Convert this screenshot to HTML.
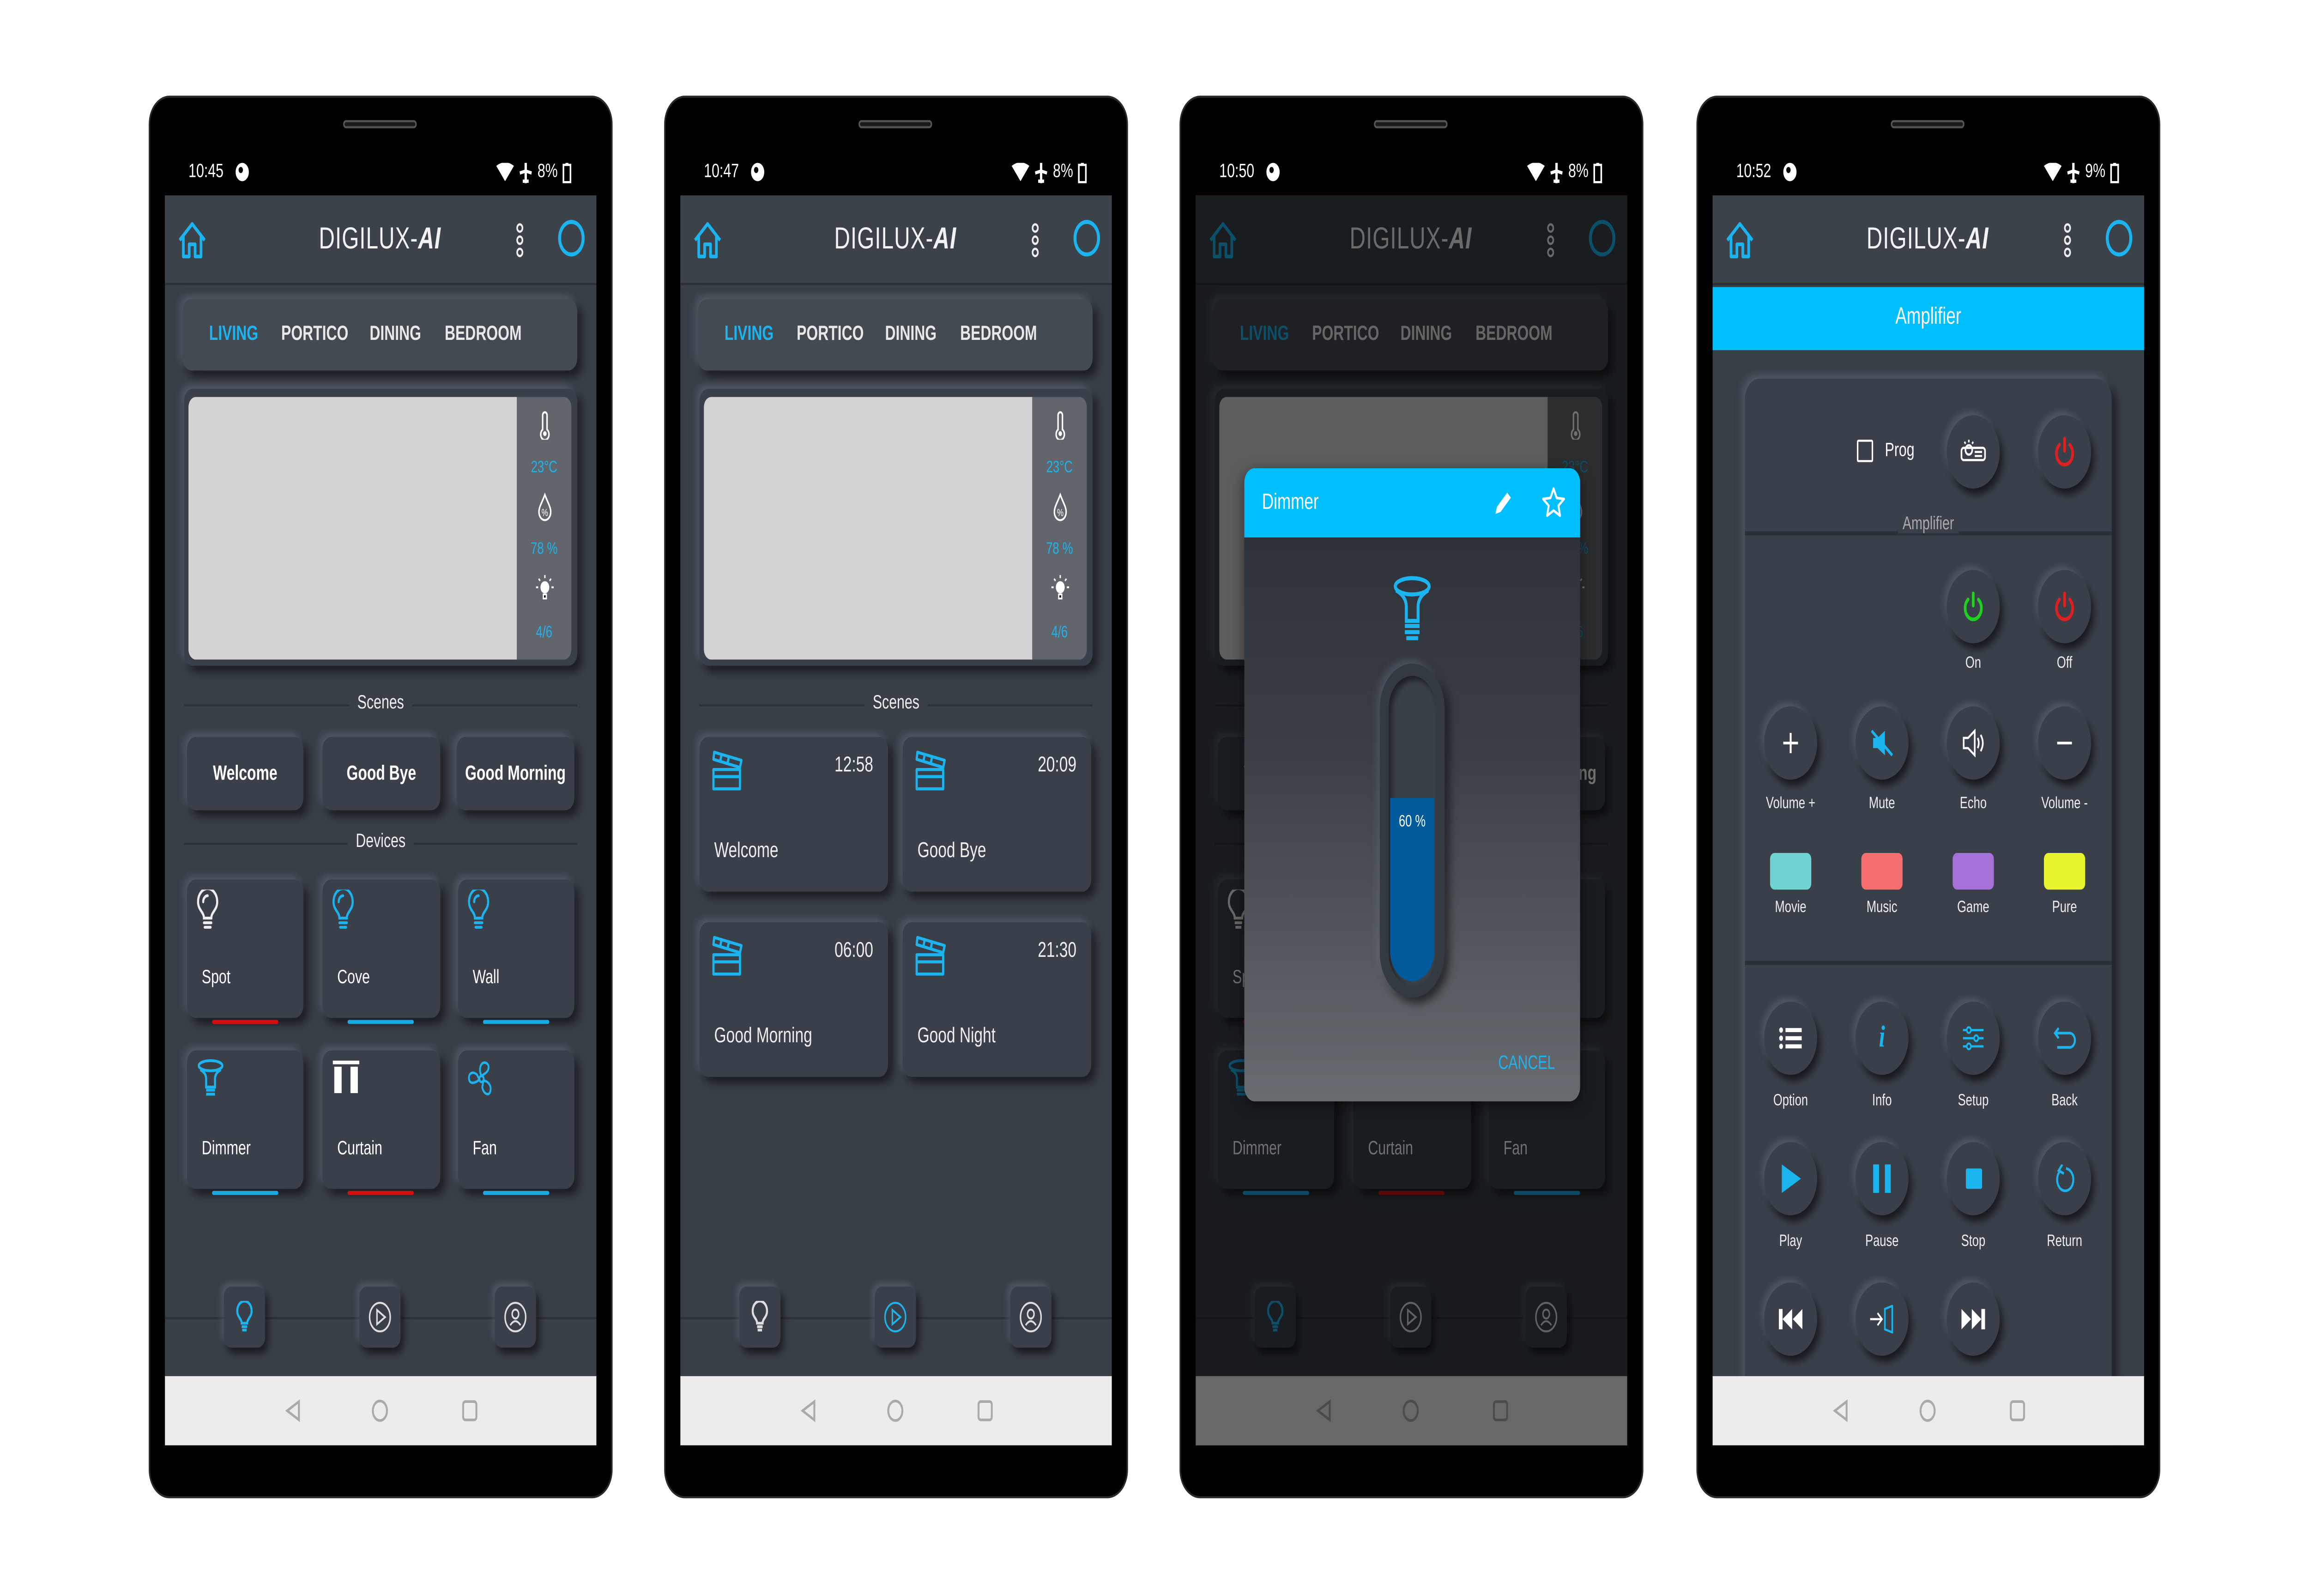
<!DOCTYPE html>
<html><head><meta charset="utf-8"><style>
*{box-sizing:border-box;margin:0;padding:0}
html,body{width:100%;height:100%;overflow:hidden;background:#fff}
#root{position:absolute;left:0;top:0;width:1568px;height:784px;transform:scale(4.408163);transform-origin:0 0;font-family:"Liberation Sans",sans-serif;color:#fff}
.ph{position:absolute;top:48px;width:313px;height:687px;background:#000;border-radius:13px;box-shadow:0 0 0 1px #2a2a2a}
.spk{position:absolute;left:131px;top:11px;width:50px;height:4px;border-radius:2px;background:#1a1a1a;border:.6px solid #555}
.tm{position:absolute;left:26px;top:31px;font-size:9.5px}
.pi{position:absolute;left:58px;top:32px;width:9px;height:9px;border-radius:50%;background:#fff}
.pi:after{content:"";position:absolute;left:2px;top:2px;width:3px;height:3px;border-radius:50%;background:#000}
.sr{position:absolute;left:235px;top:31px;font-size:9.5px;display:flex;align-items:center;gap:3px}
.scr{position:absolute;left:10px;top:48px;width:293px;height:614px;background:#393f47;overflow:hidden}
.hdr{position:absolute;left:0;top:0;width:293px;height:44px;background:#3c424a;border-bottom:1.2px solid #2b3036}
.logo{position:absolute;left:98px;top:13px;width:96px;text-align:center;font-size:15px;font-weight:300;letter-spacing:.3px;color:#f2f2f2}
.logo b{font-style:italic;font-weight:700}
.neu{position:absolute;background:#3a4049;border-radius:6px;box-shadow:-2px -2px 4px rgba(125,135,150,.35),3px 3px 5px rgba(0,0,0,.55)}
.tabs span{position:absolute;top:12px;font-size:10px;font-weight:bold;color:#e8e8e8}
.lbl{position:absolute;left:13px;width:267px;height:1px;background:#2c3137}
.lt{position:absolute;width:293px;text-align:center;font-size:9.5px;color:#eee}
.lt span{background:#393f47;padding:0 6px}
.sb{display:flex;align-items:center;justify-content:center;font-size:10px;font-weight:bold}
.dn{position:absolute;left:10px;top:43px;font-size:9.5px}
.ul{position:absolute;left:17px;width:45px;height:2.5px;bottom:-3px;border-radius:2px}
.nb{position:absolute;top:536px;width:28px;height:30px;border-radius:5px;background:#3a4049;box-shadow:-2px -2px 3px rgba(125,135,150,.3),2px 3px 4px rgba(0,0,0,.55);display:flex;align-items:center;justify-content:center}
.nav{position:absolute;left:0;top:580px;width:293px;height:34px;background:#ececec}
.side{position:absolute;left:226px;top:4px;width:37px;height:129px;background:#62666c;border-radius:0 5px 5px 0}
.side div{position:absolute;width:37px;text-align:center;font-size:8px;color:#1cb4ee;line-height:1}
.sc .t{position:absolute;right:10px;top:8px;font-size:10.5px;color:#eee}
.sc .n{position:absolute;left:10px;top:50px;font-size:10.5px;color:#eee}
.sc svg{position:absolute;left:8px;top:6px}
.rb{position:absolute;width:36px;height:36px;border-radius:50%;background:#3a4049;box-shadow:-2px -2px 3px rgba(125,135,150,.3),2px 3px 4px rgba(0,0,0,.6);display:flex;align-items:center;justify-content:center}
.rl{position:absolute;width:70px;text-align:center;font-size:8px;color:#eee}
.cr{position:absolute;width:28px;height:18px;border-radius:3px}
</style></head><body><div id="root">

<!-- PHONE 1 -->
<div class="ph" style="left:102px">
<div class="spk"></div><div class="tm">10:45</div><div class="pi"></div>
<div class="sr"><svg width="12" height="10" viewBox="0 0 12 10"><path d="M0 1.5Q6-2 12 1.5L6 9z" fill="#fff"/></svg><svg width="10" height="10" viewBox="0 0 10 10"><path d="M5 0v10M1 5l4-1 4 1M3 9h4" stroke="#fff" stroke-width="1.6" fill="none"/></svg><span>8%</span><svg width="6" height="10"><rect x=".6" y="1" width="4.8" height="8.5" fill="none" stroke="#fff" stroke-width="1.1"/><rect x="2" y="0" width="2" height="1" fill="#fff"/></svg></div>
<div class="scr">
 <div class="hdr">
  <svg style="position:absolute;left:8px;top:12px" width="21" height="20" viewBox="0 0 21 20"><path d="M2 10L10.5 2 19 10M4.5 8v10h4v-6h4v6h4V8" fill="none" stroke="#1cb4ee" stroke-width="1.8" stroke-linejoin="round"/></svg>
  <div class="logo">DIGILUX-<b>AI</b></div>
  <svg style="position:absolute;left:238px;top:13px" width="6" height="18"><circle cx="3" cy="3" r="1.8" fill="none" stroke="#eee" stroke-width="1.1"/><circle cx="3" cy="9" r="1.8" fill="none" stroke="#eee" stroke-width="1.1"/><circle cx="3" cy="15" r="1.8" fill="none" stroke="#eee" stroke-width="1.1"/></svg>
  <div style="position:absolute;left:267px;top:12px;width:18px;height:18px;border-radius:50%;border:2.6px solid #1cb4ee"></div>
 </div>
 <div class="neu tabs" style="left:12px;top:51px;width:268px;height:35px;background:#444a52"><span style="left:18px;color:#1cb4ee">LIVING</span><span style="left:67px">PORTICO</span><span style="left:127px">DINING</span><span style="left:178px">BEDROOM</span></div>
 <div class="neu" style="left:13px;top:95px;width:267px;height:136px">
  <div style="position:absolute;left:3px;top:4px;width:223px;height:129px;background:#d3d3d3;border-radius:5px 0 0 5px"></div>
  <div class="side"><div style="top:7px"><svg width="8" height="14"><path d="M2.5 9V2a1.5 1.5 0 0 1 3 0v7a2.8 2.8 0 1 1-3 0z" fill="none" stroke="#fff" stroke-width="1"/><circle cx="4" cy="11" r="1.2" fill="#fff"/></svg></div><div style="top:31px">23°C</div><div style="top:47px"><svg width="10" height="14"><path d="M5 1C3 5 1 7 1 9.5a4 4 0 0 0 8 0C9 7 7 5 5 1z" fill="none" stroke="#fff" stroke-width="1"/><text x="5" y="11.5" font-size="5" fill="#fff" text-anchor="middle">%</text></svg></div><div style="top:71px">78 %</div><div style="top:87px"><svg width="14" height="14"><circle cx="7" cy="6.5" r="3" fill="#fff"/><path d="M6 10h2v2H6zM7 .5V2M1 6.5h1.5M11.5 6.5H13M2.8 2.3l1 1M11.2 2.3l-1 1" stroke="#fff" stroke-width=".9"/></svg></div><div style="top:112px">4/6</div></div>
 </div>
 <div class="lbl" style="top:250px"></div><div class="lt" style="top:244px"><span>Scenes</span></div>
 <div class="neu sb" style="left:15px;top:266px;width:79px;height:36px">Welcome</div>
 <div class="neu sb" style="left:107px;top:266px;width:80px;height:36px">Good Bye</div>
 <div class="neu sb" style="left:198px;top:266px;width:80px;height:36px">Good Morning</div>
 <div class="lbl" style="top:318px"></div><div class="lt" style="top:312px"><span>Devices</span></div>
 <div class="neu" style="left:15px;top:336px;width:79px;height:68px"><svg style="position:absolute;left:6px;top:5px" width="16" height="20" viewBox="0 0 16 20"><path d="M5.5 14c0-3-4-4-4-8a6.5 6.5 0 0 1 13 0c0 4-4 5-4 8zM5.5 16.3h5M6 18.5h4M5 6a3 3 0 0 1 3-3" fill="none" stroke="#eee" stroke-width="1.4" stroke-linecap="round"/></svg><div class="dn">Spot</div><div class="ul" style="background:#d01010"></div></div>
 <div class="neu" style="left:107px;top:336px;width:80px;height:68px"><svg style="position:absolute;left:6px;top:5px" width="16" height="20" viewBox="0 0 16 20"><path d="M5.5 14c0-3-4-4-4-8a6.5 6.5 0 0 1 13 0c0 4-4 5-4 8zM5.5 16.3h5M6 18.5h4M5 6a3 3 0 0 1 3-3" fill="none" stroke="#1cb4ee" stroke-width="1.4" stroke-linecap="round"/></svg><div class="dn">Cove</div><div class="ul" style="background:#1ca8e0"></div></div>
 <div class="neu" style="left:199px;top:336px;width:79px;height:68px"><svg style="position:absolute;left:6px;top:5px" width="16" height="20" viewBox="0 0 16 20"><path d="M5.5 14c0-3-4-4-4-8a6.5 6.5 0 0 1 13 0c0 4-4 5-4 8zM5.5 16.3h5M6 18.5h4M5 6a3 3 0 0 1 3-3" fill="none" stroke="#1cb4ee" stroke-width="1.4" stroke-linecap="round"/></svg><div class="dn">Wall</div><div class="ul" style="background:#1ca8e0"></div></div>
 <div class="neu" style="left:15px;top:420px;width:79px;height:68px"><svg style="position:absolute;left:6px;top:4px" width="20" height="20" viewBox="0 0 20 20"><ellipse cx="10" cy="3.5" rx="8" ry="2.5" fill="none" stroke="#1cb4ee" stroke-width="1.4"/><path d="M3 5.5Q7 7 7 10v4h6v-4q0-3 4-4.5M7 15.5h6M7 17.5h6" fill="none" stroke="#1cb4ee" stroke-width="1.4"/></svg><div class="dn">Dimmer</div><div class="ul" style="background:#1ca8e0"></div></div>
 <div class="neu" style="left:107px;top:420px;width:80px;height:68px"><svg style="position:absolute;left:7px;top:5px" width="18" height="16"><rect x="0" y="0" width="18" height="1.8" fill="#fff"/><rect x="1" y="3" width="5" height="13" fill="#fff"/><rect x="12" y="3" width="5" height="13" fill="#fff"/></svg><div class="dn">Curtain</div><div class="ul" style="background:#d01010"></div></div>
 <div class="neu" style="left:199px;top:420px;width:79px;height:68px"><svg style="position:absolute;left:6px;top:5px" width="20" height="18" viewBox="0 0 20 18"><circle cx="10" cy="9" r="1.5" fill="none" stroke="#1cb4ee" stroke-width="1.2"/><path d="M10 7.5C8 5 9 1 12 1s4 3 1 5zM11.3 9.8C14 10 17 12 16 15s-5 1-5.5-2zM8.5 9.3C6 11 2 12 1.5 9s3-4 5.5-2z" fill="none" stroke="#1cb4ee" stroke-width="1.2"/></svg><div class="dn">Fan</div><div class="ul" style="background:#1ca8e0"></div></div>
 <div class="lbl" style="left:0;width:293px;top:551px"></div>
 <div class="nb" style="left:40px"><svg width="12" height="16" viewBox="0 0 16 20"><path d="M5.5 14c0-3-4-4-4-8a6.5 6.5 0 0 1 13 0c0 4-4 5-4 8zM5.5 16.3h5M6 18.5h4" fill="none" stroke="#1cb4ee" stroke-width="1.8"/></svg></div>
 <div class="nb" style="left:132px"><svg width="16" height="16"><circle cx="8" cy="8" r="7" fill="none" stroke="#ddd" stroke-width="1"/><path d="M6 4.5v7l5.5-3.5z" fill="none" stroke="#ddd" stroke-width="1"/></svg></div>
 <div class="nb" style="left:224px"><svg width="16" height="16"><circle cx="8" cy="8" r="7" fill="none" stroke="#ddd" stroke-width="1"/><circle cx="8" cy="6.5" r="2.2" fill="none" stroke="#ddd" stroke-width="1"/><path d="M4.5 12q3.5-4 7 0" fill="none" stroke="#ddd" stroke-width="1"/></svg></div>
 <div class="nav"><svg style="position:absolute;left:81px;top:11px" width="12" height="12"><path d="M10 1.5v9L2 6z" fill="none" stroke="#aaa" stroke-width="1.3"/></svg><svg style="position:absolute;left:140px;top:11px" width="12" height="12"><circle cx="6" cy="6" r="4.8" fill="none" stroke="#aaa" stroke-width="1.3"/></svg><svg style="position:absolute;left:201px;top:11px" width="12" height="12"><rect x="1.5" y="1.5" width="9" height="9" rx="1.5" fill="none" stroke="#aaa" stroke-width="1.3"/></svg></div>
</div></div>

<!-- PHONE 2 -->
<div class="ph" style="left:452px">
<div class="spk"></div><div class="tm">10:47</div><div class="pi"></div>
<div class="sr"><svg width="12" height="10" viewBox="0 0 12 10"><path d="M0 1.5Q6-2 12 1.5L6 9z" fill="#fff"/></svg><svg width="10" height="10" viewBox="0 0 10 10"><path d="M5 0v10M1 5l4-1 4 1M3 9h4" stroke="#fff" stroke-width="1.6" fill="none"/></svg><span>8%</span><svg width="6" height="10"><rect x=".6" y="1" width="4.8" height="8.5" fill="none" stroke="#fff" stroke-width="1.1"/><rect x="2" y="0" width="2" height="1" fill="#fff"/></svg></div>
<div class="scr">
 <div class="hdr">
  <svg style="position:absolute;left:8px;top:12px" width="21" height="20" viewBox="0 0 21 20"><path d="M2 10L10.5 2 19 10M4.5 8v10h4v-6h4v6h4V8" fill="none" stroke="#1cb4ee" stroke-width="1.8" stroke-linejoin="round"/></svg>
  <div class="logo">DIGILUX-<b>AI</b></div>
  <svg style="position:absolute;left:238px;top:13px" width="6" height="18"><circle cx="3" cy="3" r="1.8" fill="none" stroke="#eee" stroke-width="1.1"/><circle cx="3" cy="9" r="1.8" fill="none" stroke="#eee" stroke-width="1.1"/><circle cx="3" cy="15" r="1.8" fill="none" stroke="#eee" stroke-width="1.1"/></svg>
  <div style="position:absolute;left:267px;top:12px;width:18px;height:18px;border-radius:50%;border:2.6px solid #1cb4ee"></div>
 </div>
 <div class="neu tabs" style="left:12px;top:51px;width:268px;height:35px;background:#444a52"><span style="left:18px;color:#1cb4ee">LIVING</span><span style="left:67px">PORTICO</span><span style="left:127px">DINING</span><span style="left:178px">BEDROOM</span></div>
 <div class="neu" style="left:13px;top:95px;width:267px;height:136px">
  <div style="position:absolute;left:3px;top:4px;width:223px;height:129px;background:#d3d3d3;border-radius:5px 0 0 5px"></div>
  <div class="side"><div style="top:7px"><svg width="8" height="14"><path d="M2.5 9V2a1.5 1.5 0 0 1 3 0v7a2.8 2.8 0 1 1-3 0z" fill="none" stroke="#fff" stroke-width="1"/><circle cx="4" cy="11" r="1.2" fill="#fff"/></svg></div><div style="top:31px">23°C</div><div style="top:47px"><svg width="10" height="14"><path d="M5 1C3 5 1 7 1 9.5a4 4 0 0 0 8 0C9 7 7 5 5 1z" fill="none" stroke="#fff" stroke-width="1"/><text x="5" y="11.5" font-size="5" fill="#fff" text-anchor="middle">%</text></svg></div><div style="top:71px">78 %</div><div style="top:87px"><svg width="14" height="14"><circle cx="7" cy="6.5" r="3" fill="#fff"/><path d="M6 10h2v2H6zM7 .5V2M1 6.5h1.5M11.5 6.5H13M2.8 2.3l1 1M11.2 2.3l-1 1" stroke="#fff" stroke-width=".9"/></svg></div><div style="top:112px">4/6</div></div>
 </div>
 <div class="lbl" style="top:250px"></div><div class="lt" style="top:244px"><span>Scenes</span></div>
 <div class="neu sc" style="left:13px;top:266px;width:128px;height:76px"><svg width="22" height="21" viewBox="0 0 22 21"><path d="M1.5 10h18v9.5h-18zM1.5 13.5h18M2 1.5l18.5 4-1 3.5L1.5 5zM7 2.6l-1 3.5M12 3.7l-1 3.5" fill="none" stroke="#1cb4ee" stroke-width="1.5" stroke-linejoin="round"/></svg><div class="t">12:58</div><div class="n">Welcome</div></div>
 <div class="neu sc" style="left:151px;top:266px;width:128px;height:76px"><svg width="22" height="21" viewBox="0 0 22 21"><path d="M1.5 10h18v9.5h-18zM1.5 13.5h18M2 1.5l18.5 4-1 3.5L1.5 5zM7 2.6l-1 3.5M12 3.7l-1 3.5" fill="none" stroke="#1cb4ee" stroke-width="1.5" stroke-linejoin="round"/></svg><div class="t">20:09</div><div class="n">Good Bye</div></div>
 <div class="neu sc" style="left:13px;top:357px;width:128px;height:76px"><svg width="22" height="21" viewBox="0 0 22 21"><path d="M1.5 10h18v9.5h-18zM1.5 13.5h18M2 1.5l18.5 4-1 3.5L1.5 5zM7 2.6l-1 3.5M12 3.7l-1 3.5" fill="none" stroke="#1cb4ee" stroke-width="1.5" stroke-linejoin="round"/></svg><div class="t">06:00</div><div class="n">Good Morning</div></div>
 <div class="neu sc" style="left:151px;top:357px;width:128px;height:76px"><svg width="22" height="21" viewBox="0 0 22 21"><path d="M1.5 10h18v9.5h-18zM1.5 13.5h18M2 1.5l18.5 4-1 3.5L1.5 5zM7 2.6l-1 3.5M12 3.7l-1 3.5" fill="none" stroke="#1cb4ee" stroke-width="1.5" stroke-linejoin="round"/></svg><div class="t">21:30</div><div class="n">Good Night</div></div>
 <div class="lbl" style="left:0;width:293px;top:551px"></div>
 <div class="nb" style="left:40px"><svg width="12" height="16" viewBox="0 0 16 20"><path d="M5.5 14c0-3-4-4-4-8a6.5 6.5 0 0 1 13 0c0 4-4 5-4 8zM5.5 16.3h5M6 18.5h4" fill="none" stroke="#ddd" stroke-width="1.8"/></svg></div>
 <div class="nb" style="left:132px"><svg width="16" height="16"><circle cx="8" cy="8" r="7" fill="none" stroke="#1cb4ee" stroke-width="1"/><path d="M6 4.5v7l5.5-3.5z" fill="none" stroke="#1cb4ee" stroke-width="1"/></svg></div>
 <div class="nb" style="left:224px"><svg width="16" height="16"><circle cx="8" cy="8" r="7" fill="none" stroke="#ddd" stroke-width="1"/><circle cx="8" cy="6.5" r="2.2" fill="none" stroke="#ddd" stroke-width="1"/><path d="M4.5 12q3.5-4 7 0" fill="none" stroke="#ddd" stroke-width="1"/></svg></div>
 <div class="nav"><svg style="position:absolute;left:81px;top:11px" width="12" height="12"><path d="M10 1.5v9L2 6z" fill="none" stroke="#aaa" stroke-width="1.3"/></svg><svg style="position:absolute;left:140px;top:11px" width="12" height="12"><circle cx="6" cy="6" r="4.8" fill="none" stroke="#aaa" stroke-width="1.3"/></svg><svg style="position:absolute;left:201px;top:11px" width="12" height="12"><rect x="1.5" y="1.5" width="9" height="9" rx="1.5" fill="none" stroke="#aaa" stroke-width="1.3"/></svg></div>
</div></div>

<!-- PHONE 3 -->
<div class="ph" style="left:802px">
<div class="spk"></div><div class="tm">10:50</div><div class="pi"></div>
<div class="sr"><svg width="12" height="10" viewBox="0 0 12 10"><path d="M0 1.5Q6-2 12 1.5L6 9z" fill="#fff"/></svg><svg width="10" height="10" viewBox="0 0 10 10"><path d="M5 0v10M1 5l4-1 4 1M3 9h4" stroke="#fff" stroke-width="1.6" fill="none"/></svg><span>8%</span><svg width="6" height="10"><rect x=".6" y="1" width="4.8" height="8.5" fill="none" stroke="#fff" stroke-width="1.1"/><rect x="2" y="0" width="2" height="1" fill="#fff"/></svg></div>
<div class="scr">
 <div class="hdr">
  <svg style="position:absolute;left:8px;top:12px" width="21" height="20" viewBox="0 0 21 20"><path d="M2 10L10.5 2 19 10M4.5 8v10h4v-6h4v6h4V8" fill="none" stroke="#1cb4ee" stroke-width="1.8" stroke-linejoin="round"/></svg>
  <div class="logo">DIGILUX-<b>AI</b></div>
  <svg style="position:absolute;left:238px;top:13px" width="6" height="18"><circle cx="3" cy="3" r="1.8" fill="none" stroke="#eee" stroke-width="1.1"/><circle cx="3" cy="9" r="1.8" fill="none" stroke="#eee" stroke-width="1.1"/><circle cx="3" cy="15" r="1.8" fill="none" stroke="#eee" stroke-width="1.1"/></svg>
  <div style="position:absolute;left:267px;top:12px;width:18px;height:18px;border-radius:50%;border:2.6px solid #1cb4ee"></div>
 </div>
 <div class="neu tabs" style="left:12px;top:51px;width:268px;height:35px;background:#444a52"><span style="left:18px;color:#1cb4ee">LIVING</span><span style="left:67px">PORTICO</span><span style="left:127px">DINING</span><span style="left:178px">BEDROOM</span></div>
 <div class="neu" style="left:13px;top:95px;width:267px;height:136px">
  <div style="position:absolute;left:3px;top:4px;width:223px;height:129px;background:#d3d3d3;border-radius:5px 0 0 5px"></div>
  <div class="side"><div style="top:7px"><svg width="8" height="14"><path d="M2.5 9V2a1.5 1.5 0 0 1 3 0v7a2.8 2.8 0 1 1-3 0z" fill="none" stroke="#fff" stroke-width="1"/><circle cx="4" cy="11" r="1.2" fill="#fff"/></svg></div><div style="top:31px">23°C</div><div style="top:47px"><svg width="10" height="14"><path d="M5 1C3 5 1 7 1 9.5a4 4 0 0 0 8 0C9 7 7 5 5 1z" fill="none" stroke="#fff" stroke-width="1"/><text x="5" y="11.5" font-size="5" fill="#fff" text-anchor="middle">%</text></svg></div><div style="top:71px">78 %</div><div style="top:87px"><svg width="14" height="14"><circle cx="7" cy="6.5" r="3" fill="#fff"/><path d="M6 10h2v2H6zM7 .5V2M1 6.5h1.5M11.5 6.5H13M2.8 2.3l1 1M11.2 2.3l-1 1" stroke="#fff" stroke-width=".9"/></svg></div><div style="top:112px">4/6</div></div>
 </div>
 <div class="lbl" style="top:250px"></div><div class="lt" style="top:244px"><span>Scenes</span></div>
 <div class="neu sb" style="left:15px;top:266px;width:79px;height:36px">Welcome</div>
 <div class="neu sb" style="left:107px;top:266px;width:80px;height:36px">Good Bye</div>
 <div class="neu sb" style="left:198px;top:266px;width:80px;height:36px">Good Morning</div>
 <div class="lbl" style="top:318px"></div><div class="lt" style="top:312px"><span>Devices</span></div>
 <div class="neu" style="left:15px;top:336px;width:79px;height:68px"><svg style="position:absolute;left:6px;top:5px" width="16" height="20" viewBox="0 0 16 20"><path d="M5.5 14c0-3-4-4-4-8a6.5 6.5 0 0 1 13 0c0 4-4 5-4 8zM5.5 16.3h5M6 18.5h4" fill="none" stroke="#eee" stroke-width="1.4"/></svg><div class="dn">Spot</div><div class="ul" style="background:#d01010"></div></div>
 <div class="neu" style="left:107px;top:336px;width:80px;height:68px"><div class="dn">Cove</div><div class="ul" style="background:#1ca8e0"></div></div>
 <div class="neu" style="left:199px;top:336px;width:79px;height:68px"><div class="dn">Wall</div><div class="ul" style="background:#1ca8e0"></div></div>
 <div class="neu" style="left:15px;top:420px;width:79px;height:68px"><svg style="position:absolute;left:6px;top:4px" width="20" height="20" viewBox="0 0 20 20"><ellipse cx="10" cy="3.5" rx="8" ry="2.5" fill="none" stroke="#1cb4ee" stroke-width="1.4"/><path d="M3 5.5Q7 7 7 10v4h6v-4q0-3 4-4.5M7 15.5h6M7 17.5h6" fill="none" stroke="#1cb4ee" stroke-width="1.4"/></svg><div class="dn">Dimmer</div><div class="ul" style="background:#1ca8e0"></div></div>
 <div class="neu" style="left:107px;top:420px;width:80px;height:68px"><div class="dn">Curtain</div><div class="ul" style="background:#d01010"></div></div>
 <div class="neu" style="left:199px;top:420px;width:79px;height:68px"><div class="dn">Fan</div><div class="ul" style="background:#1ca8e0"></div></div>
 <div class="lbl" style="left:0;width:293px;top:551px"></div>
 <div class="nb" style="left:40px"><svg width="12" height="16" viewBox="0 0 16 20"><path d="M5.5 14c0-3-4-4-4-8a6.5 6.5 0 0 1 13 0c0 4-4 5-4 8zM5.5 16.3h5M6 18.5h4" fill="none" stroke="#1cb4ee" stroke-width="1.8"/></svg></div>
 <div class="nb" style="left:132px"><svg width="16" height="16"><circle cx="8" cy="8" r="7" fill="none" stroke="#ddd" stroke-width="1"/><path d="M6 4.5v7l5.5-3.5z" fill="none" stroke="#ddd" stroke-width="1"/></svg></div>
 <div class="nb" style="left:224px"><svg width="16" height="16"><circle cx="8" cy="8" r="7" fill="none" stroke="#ddd" stroke-width="1"/><circle cx="8" cy="6.5" r="2.2" fill="none" stroke="#ddd" stroke-width="1"/><path d="M4.5 12q3.5-4 7 0" fill="none" stroke="#ddd" stroke-width="1"/></svg></div>
 <div class="nav"><svg style="position:absolute;left:81px;top:11px" width="12" height="12"><path d="M10 1.5v9L2 6z" fill="none" stroke="#aaa" stroke-width="1.3"/></svg><svg style="position:absolute;left:140px;top:11px" width="12" height="12"><circle cx="6" cy="6" r="4.8" fill="none" stroke="#aaa" stroke-width="1.3"/></svg><svg style="position:absolute;left:201px;top:11px" width="12" height="12"><rect x="1.5" y="1.5" width="9" height="9" rx="1.5" fill="none" stroke="#aaa" stroke-width="1.3"/></svg></div>
 <div style="position:absolute;left:0;top:0;width:293px;height:614px;background:rgba(0,0,0,.56)"></div>
 <div style="position:absolute;left:33px;top:134px;width:228px;height:311px;border-radius:7px;overflow:hidden;background:linear-gradient(#2a2e34,#3a3f46 45%,#686b70);box-shadow:0 2px 8px rgba(0,0,0,.5)">
  <div style="position:absolute;left:0;top:0;width:228px;height:34px;background:#00bfff"><span style="position:absolute;left:12px;top:11px;font-size:11px">Dimmer</span>
   <svg style="position:absolute;left:169px;top:10px" width="14" height="14"><path d="M1.5 12.5l1-3.5 7-7 2.5 2.5-7 7z" fill="#fff"/></svg>
   <svg style="position:absolute;left:202px;top:9px" width="16" height="16" viewBox="0 0 16 16"><path d="M8 1l2.1 4.6 5 .5-3.8 3.3 1.1 4.9L8 11.8 3.6 14.3l1.1-4.9L.9 6.1l5-.5z" fill="none" stroke="#fff" stroke-width="1.3" stroke-linejoin="round"/></svg>
  </div>
  <svg style="position:absolute;left:100px;top:52px" width="28" height="34" viewBox="0 0 28 34"><ellipse cx="14" cy="6" rx="11.5" ry="4" fill="none" stroke="#1cb4ee" stroke-width="2"/><path d="M3 8Q10 11 10 16v7h8v-7q0-5 7-8M9 25.5h10M9 28.5h10M10 31.5h8" fill="none" stroke="#1cb4ee" stroke-width="2"/></svg>
  <div style="position:absolute;left:92px;top:96px;width:44px;height:164px;border-radius:22px;background:#343a41;box-shadow:-2px -2px 4px rgba(120,130,145,.35),3px 3px 5px rgba(0,0,0,.55)">
   <div style="position:absolute;left:6px;top:6px;width:32px;height:152px;border-radius:16px;background:#3a4048;box-shadow:inset 2px 2px 3px rgba(0,0,0,.5);overflow:hidden">
    <div style="position:absolute;left:1px;top:60px;width:30px;height:90px;background:#005a9c;border-radius:0 0 15px 15px"></div>
    <div style="position:absolute;left:0;top:67px;width:32px;text-align:center;font-size:8px">60 %</div>
   </div></div>
  <div style="position:absolute;right:17px;top:287px;font-size:9.5px;color:#1cb4ee">CANCEL</div>
 </div>
</div></div>

<!-- PHONE 4 -->
<div class="ph" style="left:1153px">
<div class="spk"></div><div class="tm">10:52</div><div class="pi"></div>
<div class="sr"><svg width="12" height="10" viewBox="0 0 12 10"><path d="M0 1.5Q6-2 12 1.5L6 9z" fill="#fff"/></svg><svg width="10" height="10" viewBox="0 0 10 10"><path d="M5 0v10M1 5l4-1 4 1M3 9h4" stroke="#fff" stroke-width="1.6" fill="none"/></svg><span>9%</span><svg width="6" height="10"><rect x=".6" y="1" width="4.8" height="8.5" fill="none" stroke="#fff" stroke-width="1.1"/><rect x="2" y="0" width="2" height="1" fill="#fff"/></svg></div>
<div class="scr">
 <div class="hdr">
  <svg style="position:absolute;left:8px;top:12px" width="21" height="20" viewBox="0 0 21 20"><path d="M2 10L10.5 2 19 10M4.5 8v10h4v-6h4v6h4V8" fill="none" stroke="#1cb4ee" stroke-width="1.8" stroke-linejoin="round"/></svg>
  <div class="logo">DIGILUX-<b>AI</b></div>
  <svg style="position:absolute;left:238px;top:13px" width="6" height="18"><circle cx="3" cy="3" r="1.8" fill="none" stroke="#eee" stroke-width="1.1"/><circle cx="3" cy="9" r="1.8" fill="none" stroke="#eee" stroke-width="1.1"/><circle cx="3" cy="15" r="1.8" fill="none" stroke="#eee" stroke-width="1.1"/></svg>
  <div style="position:absolute;left:267px;top:12px;width:18px;height:18px;border-radius:50%;border:2.6px solid #1cb4ee"></div>
 </div>
 <div style="position:absolute;left:0;top:45px;width:293px;height:31px;background:#00bfff;text-align:center;font-size:11.5px;line-height:31px">Amplifier</div>
 <div class="neu" style="left:22px;top:90px;width:249px;height:540px;border-radius:10px 10px 0 0">
  <div style="position:absolute;left:0;top:75px;width:249px;height:2px;background:#2b3036"></div>
  <div style="position:absolute;left:0;top:66px;width:249px;text-align:center;font-size:9px;color:#aaa"><span style="background:#3a4049;padding:0 3px">Amplifier</span></div>
  <div style="position:absolute;left:0;top:286px;width:249px;height:2px;background:#2b3036"></div>
 </div>
 <div style="position:absolute;left:98px;top:120px;width:11px;height:11px;border:1.3px solid #fff;border-radius:1px"></div>
 <div style="position:absolute;left:117px;top:120px;font-size:9.5px">Prog</div>
 <div class="rb" style="left:159px;top:108px"><svg width="18" height="12" viewBox="0 0 18 12"><rect x="1" y="4" width="16" height="6" rx="1.5" fill="none" stroke="#fff" stroke-width="1.1"/><circle cx="6" cy="5" r="2.3" fill="none" stroke="#fff" stroke-width="1.1"/><path d="M6 0v1.3M3 1l.8 1M9 1l-.8 1M10 6h5M10 8h5" stroke="#fff" stroke-width="1"/></svg></div>
 <div class="rb" style="left:221px;top:108px"><svg width="16" height="16"><path d="M4.5 4.5a5.5 5.5 0 1 0 7 0M8 1.5v6" fill="none" stroke="#e02020" stroke-width="1.8" stroke-linecap="round"/></svg></div>
 <div class="rb" style="left:159px;top:184px"><svg width="16" height="16"><path d="M4.5 4.5a5.5 5.5 0 1 0 7 0M8 1.5v6" fill="none" stroke="#20d020" stroke-width="1.8" stroke-linecap="round"/></svg></div>
 <div class="rb" style="left:221px;top:184px"><svg width="16" height="16"><path d="M4.5 4.5a5.5 5.5 0 1 0 7 0M8 1.5v6" fill="none" stroke="#e02020" stroke-width="1.8" stroke-linecap="round"/></svg></div>
 <div class="rl" style="left:142px;top:225px">On</div><div class="rl" style="left:204px;top:225px">Off</div>
 <div class="rb" style="left:35px;top:251px"><svg width="12" height="12"><path d="M6 1v10M1 6h10" stroke="#fff" stroke-width="1.3"/></svg></div>
 <div class="rb" style="left:97px;top:251px"><svg width="16" height="14" viewBox="0 0 16 14"><path d="M2 4.5h3l5-3.5v12l-5-3.5H2z" fill="#1cb4ee"/><path d="M1 1l14 12" stroke="#1cb4ee" stroke-width="1.5"/></svg></div>
 <div class="rb" style="left:159px;top:251px"><svg width="16" height="14" viewBox="0 0 16 14"><path d="M1.5 4.5h3l4.5-3.5v12l-4.5-3.5h-3z" fill="none" stroke="#fff" stroke-width="1.1"/><path d="M11 4.5q1.5 2.5 0 5M13 3q3 4 0 8" fill="none" stroke="#fff" stroke-width="1.1"/></svg></div>
 <div class="rb" style="left:221px;top:251px"><svg width="12" height="12"><path d="M1 6h10" stroke="#fff" stroke-width="1.3"/></svg></div>
 <div class="rl" style="left:18px;top:294px">Volume +</div><div class="rl" style="left:80px;top:294px">Mute</div><div class="rl" style="left:142px;top:294px">Echo</div><div class="rl" style="left:204px;top:294px">Volume -</div>
 <div class="cr" style="left:39px;top:323px;background:#6fd3d0"></div><div class="cr" style="left:101px;top:323px;background:#f76e6e"></div><div class="cr" style="left:163px;top:323px;background:#a571d6"></div><div class="cr" style="left:225px;top:323px;background:#e8f52e"></div>
 <div class="rl" style="left:18px;top:345px">Movie</div><div class="rl" style="left:80px;top:345px">Music</div><div class="rl" style="left:142px;top:345px">Game</div><div class="rl" style="left:204px;top:345px">Pure</div>
 <div class="rb" style="left:35px;top:396px"><svg width="16" height="12"><circle cx="1.5" cy="2" r="1.3" fill="#fff"/><circle cx="1.5" cy="6" r="1.3" fill="#fff"/><circle cx="1.5" cy="10" r="1.3" fill="#fff"/><path d="M4.5 2h11M4.5 6h11M4.5 10h11" stroke="#fff" stroke-width="2"/></svg></div>
 <div class="rb" style="left:97px;top:396px"><span style="color:#1cb4ee;font-family:'Liberation Serif',serif;font-style:italic;font-weight:bold;font-size:15px">i</span></div>
 <div class="rb" style="left:159px;top:396px"><svg width="16" height="12"><path d="M1 2h14M1 6h14M1 10h14" stroke="#1cb4ee" stroke-width="1.1"/><circle cx="5" cy="2" r="1.4" fill="#3a4049" stroke="#1cb4ee"/><circle cx="10" cy="6" r="1.4" fill="#3a4049" stroke="#1cb4ee"/><circle cx="5" cy="10" r="1.4" fill="#3a4049" stroke="#1cb4ee"/></svg></div>
 <div class="rb" style="left:221px;top:396px"><svg width="16" height="12"><path d="M4 1L1.5 3.5 4 6M1.5 3.5h10a3.5 3.5 0 0 1 0 7H3" fill="none" stroke="#1cb4ee" stroke-width="1.3"/></svg></div>
 <div class="rl" style="left:18px;top:440px">Option</div><div class="rl" style="left:80px;top:440px">Info</div><div class="rl" style="left:142px;top:440px">Setup</div><div class="rl" style="left:204px;top:440px">Back</div>
 <div class="rb" style="left:35px;top:465px"><svg width="14" height="14"><path d="M1 0v14l13-7z" fill="#1cb4ee"/></svg></div>
 <div class="rb" style="left:97px;top:465px"><svg width="12" height="14"><rect x="0" y="0" width="4" height="14" fill="#1cb4ee"/><rect x="8" y="0" width="4" height="14" fill="#1cb4ee"/></svg></div>
 <div class="rb" style="left:159px;top:465px"><div style="width:11px;height:10px;background:#1cb4ee;border-radius:1px"></div></div>
 <div class="rb" style="left:221px;top:465px"><svg width="14" height="14"><path d="M4 3.2A5.5 5.5 0 1 0 8 2M5.5 0L3 3l3.5 1.5" fill="none" stroke="#1cb4ee" stroke-width="1.3"/></svg></div>
 <div class="rl" style="left:18px;top:509px">Play</div><div class="rl" style="left:80px;top:509px">Pause</div><div class="rl" style="left:142px;top:509px">Stop</div><div class="rl" style="left:204px;top:509px">Return</div>
 <div class="rb" style="left:35px;top:534px"><svg width="16" height="10"><rect x="0" y="0" width="2.5" height="10" fill="#fff"/><path d="M9 0v10L2.5 5zM16 0v10L9.5 5z" fill="#fff"/></svg></div>
 <div class="rb" style="left:97px;top:534px"><svg width="18" height="14"><path d="M1 7h8M6 4l3 3-3 3" fill="none" stroke="#fff" stroke-width="1"/><path d="M11 2l5-1.5v13L11 12z" fill="none" stroke="#1cb4ee" stroke-width="1.1"/></svg></div>
 <div class="rb" style="left:159px;top:534px"><svg width="16" height="10"><rect x="13.5" y="0" width="2.5" height="10" fill="#fff"/><path d="M0 0v10l6.5-5zM7 0v10l6.5-5z" fill="#fff"/></svg></div>
 <div class="nav"><svg style="position:absolute;left:81px;top:11px" width="12" height="12"><path d="M10 1.5v9L2 6z" fill="none" stroke="#aaa" stroke-width="1.3"/></svg><svg style="position:absolute;left:140px;top:11px" width="12" height="12"><circle cx="6" cy="6" r="4.8" fill="none" stroke="#aaa" stroke-width="1.3"/></svg><svg style="position:absolute;left:201px;top:11px" width="12" height="12"><rect x="1.5" y="1.5" width="9" height="9" rx="1.5" fill="none" stroke="#aaa" stroke-width="1.3"/></svg></div>
</div></div>

</div>
<script>
(function(){var w=window.innerWidth||document.documentElement.clientWidth,h=window.innerHeight||document.documentElement.clientHeight;if(w>0&&h>0){document.getElementById('root').style.transform='scale('+(w/1568)+','+(h/784)+')';}})();
</script>
</body></html>
